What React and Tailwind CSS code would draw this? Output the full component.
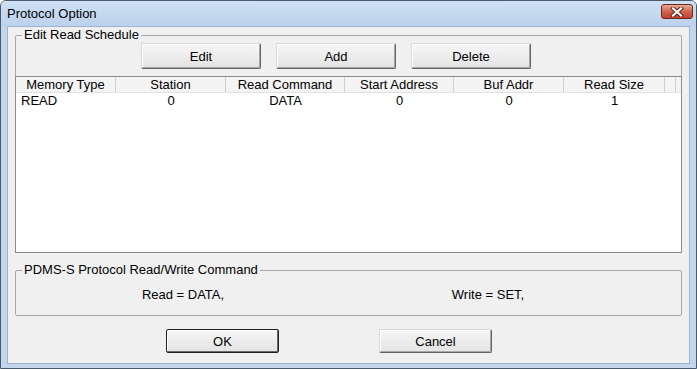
import React from 'react';

const columns = [
  { label: 'Memory Type', width: 'w-[100px]' },
  { label: 'Station', width: 'w-[110px]' },
  { label: 'Read Command', width: 'w-[119px]' },
  { label: 'Start Address', width: 'w-[109px]' },
  { label: 'Buf Addr', width: 'w-[110px]' },
  { label: 'Read Size', width: 'w-[101px]' },
];

const rows = [['READ', '0', 'DATA', '0', '0', '1']];

const WinButton = ({ children, className = '', isDefault = false }) => (
  <button
    className={
      'flex items-center justify-center border rounded-[2px] bg-gradient-to-b from-[#f6f6f6] to-[#e3e3e3] text-[13px] leading-none ' +
      (isDefault
        ? 'border-[#202020] shadow-[inset_-1px_-1px_0_#6a6a6a,inset_1px_1px_0_#ffffff] '
        : 'border-t-[#d8d8d8] border-l-[#d8d8d8] border-r-[#646464] border-b-[#646464] shadow-[inset_-1px_-1px_0_#a8a8a8,inset_1px_1px_0_#ffffff] ') +
      className
    }
  >
    {children}
  </button>
);

const App = () => {
  return (
    <div
      className="w-[697px] h-[369px] flex flex-col bg-[#c3d6ec] border border-[#4a5a6e] rounded-t-[6px] text-black overflow-hidden"
      style={{ fontFamily: '"Liberation Sans", Arial, sans-serif' }}
    >
      {/* title bar */}
      <div className="h-[25px] flex items-center justify-between pl-[6px] pr-[3px] bg-gradient-to-b from-[#cfe0f3] to-[#bcd2ec]">
        <span className="text-[13px] leading-none">Protocol Option</span>
        <div className="self-start mt-[3px] w-[32px] h-[15px] rounded-[3px] border border-[#6b2a20] bg-gradient-to-b from-[#e9a896] via-[#d2634f] to-[#c1412c] flex items-center justify-center">
          <svg width="14" height="10" viewBox="0 0 14 10">
            <path d="M3 1.5 L11 8.5 M11 1.5 L3 8.5" stroke="#5a2119" strokeWidth="4" strokeLinecap="square" />
            <path d="M3 1.5 L11 8.5 M11 1.5 L3 8.5" stroke="#ffffff" strokeWidth="2.2" strokeLinecap="square" />
          </svg>
        </div>
      </div>

      {/* client area */}
      <div className="flex-1 px-[6px] pb-[4px] flex flex-col">
        <div className="flex-1 bg-[#f0f0f0] border border-[#9fb4cc] px-[7px] pt-[1px] flex flex-col">
          <fieldset className="border-t border-l border-r border-[#a8a8a8] rounded-t-[2px]">
            <legend className="ml-[6px] px-[2px] text-[13px] leading-[14px]">Edit Read Schedule</legend>
            <div className="flex gap-[15px] ml-[125px] mt-[1px]">
              <WinButton className="w-[120px] h-[26px]">Edit</WinButton>
              <WinButton className="w-[120px] h-[26px]">Add</WinButton>
              <WinButton className="w-[120px] h-[26px]">Delete</WinButton>
            </div>
            <div className="-mx-px mt-[7px] h-[177px] border border-[#8c8c8c] bg-white text-[13px]">
              <div className="flex h-[16px] bg-[#f4f4f4] border-b border-[#e2e2e2]">
                {columns.map((c) => (
                  <div
                    key={c.label}
                    className={c.width + ' shrink-0 border-r border-[#cfcfcf] text-center leading-[16px]'}
                  >
                    {c.label}
                  </div>
                ))}
                <div className="w-[11px] border-r border-[#cfcfcf]" />
              </div>
              {rows.map((r, i) => (
                <div key={i} className="flex h-[15px] leading-[15px]">
                  {r.map((v, j) => (
                    <div
                      key={j}
                      className={columns[j].width + ' shrink-0 ' + (j === 0 ? 'pl-[5px] text-left' : 'text-center')}
                    >
                      {v}
                    </div>
                  ))}
                </div>
              ))}
            </div>
          </fieldset>

          <fieldset className="mt-[10px] border border-[#a8a8a8] rounded-[2px] pb-[13px]">
            <legend className="ml-[6px] px-[2px] text-[13px] leading-[14px]">
              PDMS-S Protocol Read/Write Command
            </legend>
            <div className="flex mt-[10px] text-[13px] leading-[15px]">
              <span className="w-[334px] text-center">Read = DATA,</span>
              <span className="w-[276px] text-center">Write = SET,</span>
            </div>
          </fieldset>

          <div className="flex gap-[100px] ml-[151px] mt-[13px]">
            <WinButton isDefault className="w-[113px] h-[24px]">OK</WinButton>
            <WinButton className="w-[113px] h-[24px]">Cancel</WinButton>
          </div>
        </div>
      </div>
    </div>
  );
};

export default App;
